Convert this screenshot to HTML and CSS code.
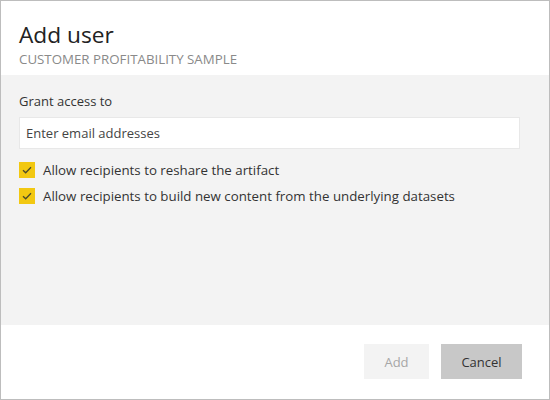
FILE: index.html
```html
<!DOCTYPE html>
<html lang="en">
<head>
<meta charset="utf-8">
<title>Add user</title>
<link rel="stylesheet" href="styles.css">
</head>
<body>
<div class="dialog">
  <header class="header">
    <h1 class="title">Add user</h1>
    <div class="subtitle">CUSTOMER PROFITABILITY SAMPLE</div>
  </header>
  <main class="body">
    <label class="label" for="email">Grant access to</label>
    <input class="input" id="email" type="text" placeholder="Enter email addresses">
    <div class="option">
      <span class="check"><svg width="10" height="8" viewBox="0 0 10 8"><path d="M1 4.2 L3.7 6.8 L9 1.2" fill="none" stroke="#4a4a2a" stroke-width="1.3"/></svg></span>
      <span class="option-text">Allow recipients to reshare the artifact</span>
    </div>
    <div class="option">
      <span class="check"><svg width="10" height="8" viewBox="0 0 10 8"><path d="M1 4.2 L3.7 6.8 L9 1.2" fill="none" stroke="#4a4a2a" stroke-width="1.3"/></svg></span>
      <span class="option-text">Allow recipients to build new content from the underlying datasets</span>
    </div>
  </main>
  <footer class="footer">
    <button class="btn btn-disabled" type="button">Add</button>
    <button class="btn btn-cancel" type="button">Cancel</button>
  </footer>
</div>
</body>
</html>
```
FILE: styles.css
```css
* { box-sizing: border-box; }
html, body { margin: 0; padding: 0; }
body {
  width: 550px;
  height: 400px;
  font-family: "Segoe UI", "Open Sans", "Noto Sans", sans-serif;
  color: #333;
  background: #fff;
}
.dialog {
  width: 550px;
  height: 400px;
  border: 1px solid #bdbdbd;
  display: flex;
  flex-direction: column;
  background: #fff;
}
.header {
  height: 74px;
  padding: 19px 18px 0 18px;
}
.title {
  margin: 0;
  font-size: 22.7px;
  font-weight: 400;
  line-height: 30px;
  color: #222;
}
.subtitle {
  font-size: 13.3px;
  line-height: 16px;
  color: #8a8a8a;
  margin-top: 1px;
}
.body {
  background: #f3f3f3;
  height: 250px;
  padding: 17px 29px 0 18px;
  display: flex;
  flex-direction: column;
}
.label {
  font-size: 13px;
  line-height: 18px;
  color: #333;
}
.input {
  margin-top: 7px;
  height: 32px;
  border: 1px solid #e8e8e8;
  background: #fff;
  padding: 0 6px;
  font-family: inherit;
  font-size: 13px;
  color: #444;
  outline: none;
}
.input::placeholder { color: #444; }
.option {
  display: flex;
  align-items: center;
  gap: 8px;
  margin-top: 13px;
  height: 16px;
}
.option + .option { margin-top: 10px; }
.check {
  width: 16px;
  height: 16px;
  background: #f2c811;
  display: flex;
  align-items: center;
  justify-content: center;
  flex: none;
}
.option-text {
  font-size: 13.3px;
  color: #333;
  line-height: 16px;
}
.footer {
  flex: 1;
  display: flex;
  justify-content: flex-end;
  align-items: flex-start;
  gap: 12px;
  padding: 19px 27px 0 0;
}
.btn {
  height: 35px;
  border: none;
  font-family: inherit;
  font-size: 13px;
  padding: 0;
}
.btn-disabled {
  width: 65px;
  background: #f3f3f3;
  color: #a6a6a6;
}
.btn-cancel {
  width: 81px;
  background: #c8c8c8;
  color: #333;
}
```
